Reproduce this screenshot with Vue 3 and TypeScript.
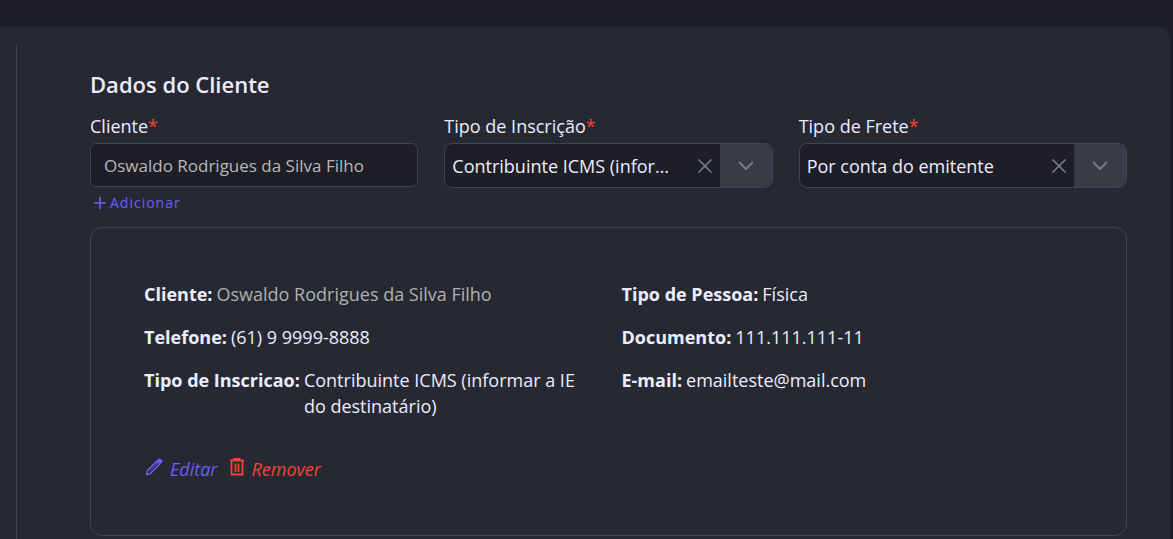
<script setup lang="ts">
import { ref } from 'vue'

const client = ref('Oswaldo Rodrigues da Silva Filho')

const selects = ref([
  {
    id: 'inscricao',
    label: 'Tipo de Inscrição',
    value: 'Contribuinte ICMS (informar a IE do destinatário)',
  },
  { id: 'frete', label: 'Tipo de Frete', value: 'Por conta do emitente' },
])

const details = [
  { label: 'Cliente:', value: 'Oswaldo Rodrigues da Silva Filho', muted: true },
  { label: 'Tipo de Pessoa:', value: 'Física' },
  { label: 'Telefone:', value: '(61) 9 9999-8888' },
  { label: 'Documento:', value: '111.111.111-11' },
  { label: 'Tipo de Inscricao:', value: 'Contribuinte ICMS (informar a IE do destinatário)' },
  { label: 'E-mail:', value: 'emailteste@mail.com' },
]
</script>

<template>
  <main class="page">
    <section class="panel">
      <div class="content">
        <h2 class="title">Dados do Cliente</h2>
        <form class="fields" @submit.prevent>
          <div class="field">
            <label class="label" for="cliente">Cliente<span class="required">*</span></label>
            <input id="cliente" v-model="client" class="input" type="text" />
            <button class="add" type="button">
              <svg width="14" height="14" viewBox="0 0 14 14" aria-hidden="true">
                <path d="M7 1v12M1 7h12" fill="none" stroke="currentColor" stroke-width="1.6" />
              </svg>
              <span>Adicionar</span>
            </button>
          </div>
          <div v-for="s in selects" :key="s.id" class="field">
            <label class="label" :for="s.id">{{ s.label }}<span class="required">*</span></label>
            <div class="combo">
              <select :id="s.id" class="select">
                <option>{{ s.value }}</option>
              </select>
              <button class="clear" type="button" aria-label="Limpar">
                <svg width="16" height="16" viewBox="0 0 16 16" aria-hidden="true">
                  <path d="M1.5 1.5l13 13M14.5 1.5l-13 13" fill="none" stroke="currentColor" stroke-width="1.5" />
                </svg>
              </button>
              <span class="arrow" aria-hidden="true">
                <svg width="16" height="10" viewBox="0 0 16 10">
                  <path d="M1 1l7 7 7-7" fill="none" stroke="currentColor" stroke-width="2" />
                </svg>
              </span>
            </div>
          </div>
        </form>

        <article class="card">
          <dl class="details">
            <div v-for="d in details" :key="d.label" class="detail">
              <dt>{{ d.label }}</dt>
              <dd :class="{ muted: d.muted }">{{ d.value }}</dd>
            </div>
          </dl>
          <div class="actions">
            <button class="action edit" type="button">
              <svg width="20" height="20" viewBox="0 0 20 20" aria-hidden="true">
                <path
                  d="M2.5 17.5l.8-3.7L13.2 3.9l2.9 2.9L6.2 16.7z"
                  fill="none" stroke="currentColor" stroke-width="1.5" stroke-linejoin="round"
                />
                <path d="M5.5 14.5l8.5-8.5" fill="none" stroke="currentColor" stroke-width="0.8" />
                <path
                  d="M13 3.6l1.8-1.8a1.2 1.2 0 0 1 1.7 0l1.7 1.7a1.2 1.2 0 0 1 0 1.7l-1.8 1.8z"
                  fill="currentColor"
                />
              </svg>
              <span>Editar</span>
            </button>
            <button class="action remove" type="button">
              <svg width="16" height="18" viewBox="0 0 16 18" aria-hidden="true">
                <path
                  d="M1 2.5h14M5.5 2V1h5v1M2.5 3v13.5h11V3M6.500 5.5v8.500M9.500 5.5v8.500"
                  fill="none" stroke="currentColor" stroke-width="1.8"
                />
              </svg>
              <span>Remover</span>
            </button>
          </div>
        </article>
      </div>
    </section>
  </main>
</template>

<style>
body {
  margin: 0;
  background: #1e1e27;
}
</style>

<style scoped>
.page {
  box-sizing: border-box;
  display: flex;
  min-height: 100vh;
  padding: 27px 3px 0 0;
  background: #1e1e27;
  color: #ececff;
  font-family: 'Segoe UI', 'Open Sans', 'Noto Sans', sans-serif;
  font-size: 18px;
  line-height: 26px;
}

.panel {
  box-sizing: border-box;
  flex: 1;
  display: flex;
  padding: 17px 43px 0 16px;
  background: #272932;
  border-radius: 0 12px 0 0;
}

.content {
  flex: 1;
  min-width: 0;
  padding: 24px 0 3px 73px;
  border-left: 1px solid #39435a;
}

.title {
  margin: 0 0 13px;
  font-size: 22px;
  line-height: 32px;
  font-weight: 600;
}

.fields {
  display: grid;
  grid-template-columns: repeat(3, minmax(0, 1fr));
  gap: 26px;
}

.field {
  display: flex;
  flex-direction: column;
}

.label {
  margin-bottom: 4px;
}

.required {
  color: #f44336;
}

.input {
  box-sizing: border-box;
  width: 100%;
  height: 44px;
  padding: 0 13px;
  border: 1px solid #34465a;
  border-radius: 6px;
  background: #1e1e27;
  color: #b8b8b8;
  font: inherit;
  font-size: 17px;
}

.add,
.clear,
.action {
  display: flex;
  align-items: center;
  padding: 0;
  border: 0;
  background: none;
  font: inherit;
}

.add {
  align-self: flex-start;
  gap: 3px;
  margin: 5px 0 0 3px;
  color: #6a5cff;
  font-size: 14px;
  line-height: 22px;
  letter-spacing: 1px;
}

.combo {
  display: flex;
  box-sizing: border-box;
  height: 45px;
  overflow: hidden;
  border: 1px solid #34465a;
  border-radius: 8px;
  background: #1e1e27;
}

.select {
  flex: 1;
  min-width: 0;
  padding: 0 20px 0 7px;
  border: 0;
  appearance: none;
  background: none;
  color: inherit;
  font: inherit;
  text-overflow: ellipsis;
  overflow: hidden;
  white-space: nowrap;
}

.clear {
  justify-content: center;
  width: 30px;
  color: #7c808a;
}

.arrow {
  display: flex;
  align-items: center;
  justify-content: center;
  width: 52px;
  background: #393b46;
  color: #767a85;
}

.card {
  padding: 53px;
  margin-top: 13px;
  border: 1px solid #34465a;
  border-radius: 12px;
}

.details {
  display: grid;
  grid-template-columns: repeat(2, minmax(0, 1fr));
  gap: 17px 26px;
  margin: 0;
}

.detail {
  display: flex;
  gap: 4px;
}

.detail dt {
  flex: none;
  font-weight: 700;
}

.detail dd {
  margin: 0;
}

.detail .muted {
  color: #b0b0b0;
}

.actions {
  display: flex;
  gap: 12px;
  margin-top: 37px;
}

.action {
  gap: 6px;
  font-style: italic;
}

.action svg {
  margin-bottom: 5px;
}

.edit {
  color: #6a5cff;
}

.remove {
  color: #f44336;
}
</style>
